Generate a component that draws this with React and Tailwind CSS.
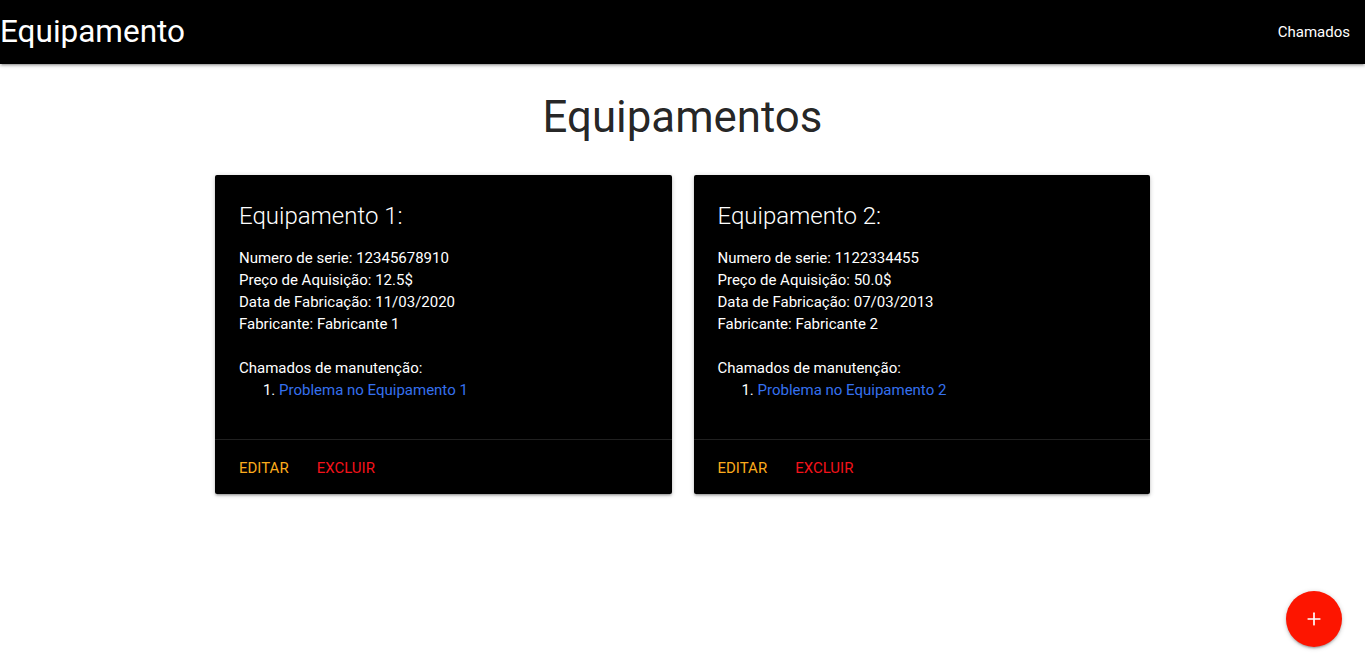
import { Plus } from "lucide-react";

const equipamentos = [
  {
    id: 1,
    serie: "12345678910",
    preco: "12.5$",
    data: "11/03/2020",
    fabricante: "Fabricante 1",
    chamados: ["Problema no Equipamento 1"],
  },
  {
    id: 2,
    serie: "1122334455",
    preco: "50.0$",
    data: "07/03/2013",
    fabricante: "Fabricante 2",
    chamados: ["Problema no Equipamento 2"],
  },
];

function EquipCard({ item }) {
  return (
    <div className="bg-black text-white rounded-[2px] shadow-[0_2px_2px_0_rgba(0,0,0,0.14),0_3px_1px_-2px_rgba(0,0,0,0.12),0_1px_5px_0_rgba(0,0,0,0.2)]">
      <div className="px-6 pt-[25px] pb-[23px]">
        <div className="text-[24px] font-light leading-8">Equipamento {item.id}:</div>
        <div className="mt-[15px] leading-[22px]">
          <div>Numero de serie: {item.serie}</div>
          <div>Preço de Aquisição: {item.preco}</div>
          <div>Data de Fabricação: {item.data}</div>
          <div>Fabricante: {item.fabricante}</div>
          <div className="mt-[22px]">Chamados de manutenção:</div>
          <ol className="list-decimal pl-10 pb-[15px]">
            {item.chamados.map((c) => (
              <li key={c}>
                <a href="#" className="text-[#3570ee]">{c}</a>
              </li>
            ))}
          </ol>
        </div>
      </div>
      <div className="border-t border-[rgba(160,160,160,0.2)] px-6 pt-[17px] pb-[15px] flex gap-7 leading-[22px] uppercase">
        <a href="#" className="text-[#fbab1c]">Editar</a>
        <a href="#" className="text-[#f3121a]">Excluir</a>
      </div>
    </div>
  );
}

export default function App() {
  return (
    <div className="min-h-[670px] bg-white text-[15px] font-['Roboto',sans-serif]">
      <nav className="h-16 bg-black text-white flex items-center justify-between shadow-[0_2px_2px_0_rgba(0,0,0,0.14),0_3px_1px_-2px_rgba(0,0,0,0.12),0_1px_5px_0_rgba(0,0,0,0.2)]">
        <a href="#" className="text-[31.5px] leading-none">Equipamento</a>
        <a href="#" className="px-[15px]">Chamados</a>
      </nav>

      <h3 className="text-center text-[43.8px] leading-[48px] text-[rgba(0,0,0,0.87)] mt-[29px]">
        Equipamentos
      </h3>

      <div className="w-[957px] mx-auto mt-[34px] grid grid-cols-2">
        {equipamentos.map((item) => (
          <div key={item.id} className="px-[11px]">
            <EquipCard item={item} />
          </div>
        ))}
      </div>

      <button className="fixed right-[23px] bottom-[23px] w-14 h-14 rounded-full bg-[#fd1500] text-white flex items-center justify-center shadow-[0_2px_2px_0_rgba(0,0,0,0.14),0_3px_1px_-2px_rgba(0,0,0,0.12),0_1px_5px_0_rgba(0,0,0,0.2)]">
        <Plus size={20} strokeWidth={2} />
      </button>
    </div>
  );
}
